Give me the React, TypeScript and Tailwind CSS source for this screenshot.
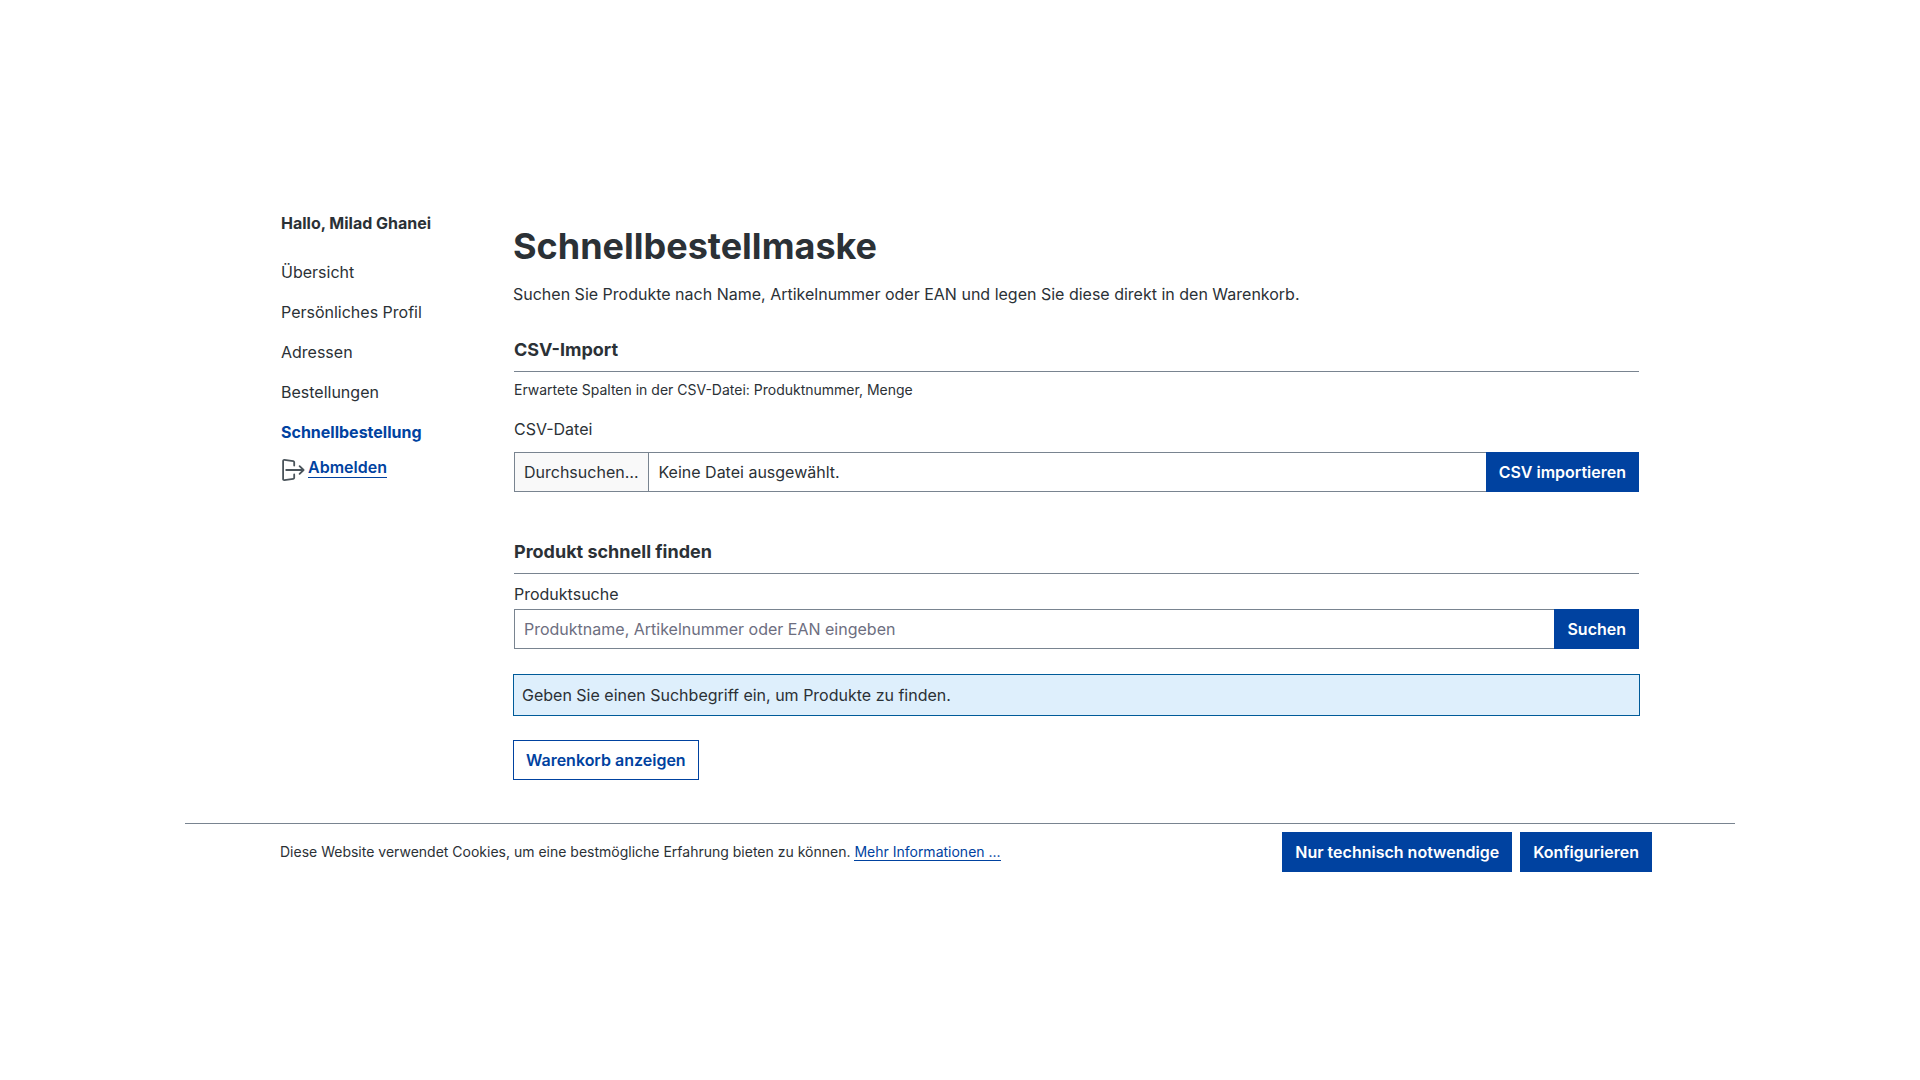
import type { ReactNode } from 'react';

const navItems = ['Übersicht', 'Persönliches Profil', 'Adressen', 'Bestellungen'];

const primaryButton =
  'h-10 shrink-0 cursor-pointer bg-[#0042a0] px-[13px] text-base font-semibold whitespace-nowrap text-white hover:bg-[#003580]';

function LogoutIcon() {
  return (
    <svg
      className="mt-px h-6 w-6 shrink-0"
      viewBox="0 0 24 24"
      fill="none"
      stroke="#4a545b"
      strokeWidth="1.8"
      strokeLinecap="round"
      strokeLinejoin="round"
      aria-hidden="true"
    >
      <path d="M13.2 7.6V4.3c0-.7-.3-1-.9-1.1L3.4 1.9c-.8-.1-1.3.3-1.3 1.1v18c0 .8.5 1.2 1.3 1.1l8.9-1.3c.6-.1.9-.4.9-1.1v-3.3" />
      <path d="M5.2 12h17.2M18.6 8.1l4 3.9-4 3.9" />
    </svg>
  );
}

function SectionTitle({ children }: { children: ReactNode }) {
  return (
    <h2 className="border-b border-[#798490] pb-[7px] text-lg leading-7 font-bold">{children}</h2>
  );
}

function Sidebar() {
  return (
    <aside className="w-[233px] shrink-0 pl-px">
      <p className="mb-[25px] leading-6 font-bold">Hallo, Milad Ghanei</p>
      <nav>
        <ul className="space-y-4">
          {navItems.map((item) => (
            <li key={item} className="leading-6">
              <a href="#" className="hover:underline">{item}</a>
            </li>
          ))}
          <li className="leading-6">
            <a href="#" aria-current="page" className="font-bold text-[#0042a0]">
              Schnellbestellung
            </a>
          </li>
        </ul>
      </nav>
      <div className="mt-[13px] flex items-start gap-[3px]">
        <LogoutIcon />
        <a href="#" className="border-b border-[#0042a0] leading-5 font-semibold text-[#0042a0]">
          Abmelden
        </a>
      </div>
    </aside>
  );
}

function CsvImport() {
  return (
    <section className="px-px">
      <SectionTitle>CSV-Import</SectionTitle>
      <p className="mt-2 text-sm leading-5">Erwartete Spalten in der CSV-Datei: Produktnummer, Menge</p>
      <form className="mt-[17px]" onSubmit={(e) => e.preventDefault()}>
        <label htmlFor="csv-file" className="block leading-6">CSV-Datei</label>
        <div className="relative mt-[11px] flex h-10">
          <input id="csv-file" type="file" accept=".csv" className="sr-only" />
          <label
            htmlFor="csv-file"
            className="flex flex-1 cursor-pointer items-stretch border border-r-0 border-[#798490]"
          >
            <span className="flex items-center border-r border-[#798490] bg-[#f9f9f9] pr-[10px] pl-[9px]">
              Durchsuchen…
            </span>
            <span className="flex items-center px-[9px]">Keine Datei ausgewählt.</span>
          </label>
          <button type="submit" className={primaryButton}>CSV importieren</button>
        </div>
      </form>
    </section>
  );
}

function ProductSearch() {
  return (
    <section className="mt-[46px] px-px">
      <SectionTitle>Produkt schnell finden</SectionTitle>
      <form className="mt-2" onSubmit={(e) => e.preventDefault()}>
        <label htmlFor="product-search" className="block leading-6">Produktsuche</label>
        <div className="mt-[3px] flex">
          <input
            id="product-search"
            type="search"
            placeholder="Produktname, Artikelnummer oder EAN eingeben"
            className="h-10 min-w-0 flex-1 border border-r-0 border-[#798490] px-[9px] text-base placeholder:text-[#6d6e80]"
          />
          <button type="submit" className={primaryButton}>Suchen</button>
        </div>
      </form>
    </section>
  );
}

function CookieBar() {
  return (
    <div className="mt-[43px] flex items-center border-t border-[#798490] pt-2 pr-[83px] pl-[95px]">
      <p className="flex-1 text-sm">
        Diese Website verwendet Cookies, um eine bestmögliche Erfahrung bieten zu können.{' '}
        <a href="#" className="border-b border-[#0042a0] text-[#0042a0]">Mehr Informationen ...</a>
      </p>
      <div className="flex gap-2">
        <button type="button" className={primaryButton}>Nur technisch notwendige</button>
        <button type="button" className={primaryButton}>Konfigurieren</button>
      </div>
    </div>
  );
}

export default function App() {
  return (
    <div className="min-h-screen bg-white pt-[211px] font-['Inter',sans-serif] text-base text-[#2b3136]">
      <div className="mx-auto max-w-[1550px]">
        <div className="flex px-[95px]">
          <Sidebar />
          <main className="min-w-0 flex-1 pt-[11px]">
            <h1 className="text-4xl leading-12 font-bold">Schnellbestellmaske</h1>
            <p className="mt-3 mb-[30px] leading-6">
              Suchen Sie Produkte nach Name, Artikelnummer oder EAN und legen Sie diese direkt in den Warenkorb.
            </p>
            <CsvImport />
            <ProductSearch />
            <div role="status" className="mt-[25px] border border-[#005b99] bg-[#deeffc] p-2 leading-6">
              Geben Sie einen Suchbegriff ein, um Produkte zu finden.
            </div>
            <button
              type="button"
              className="mt-6 h-10 cursor-pointer border border-[#0042a0] bg-white px-3 font-semibold text-[#0042a0]"
            >
              Warenkorb anzeigen
            </button>
          </main>
        </div>
        <CookieBar />
      </div>
    </div>
  );
}
